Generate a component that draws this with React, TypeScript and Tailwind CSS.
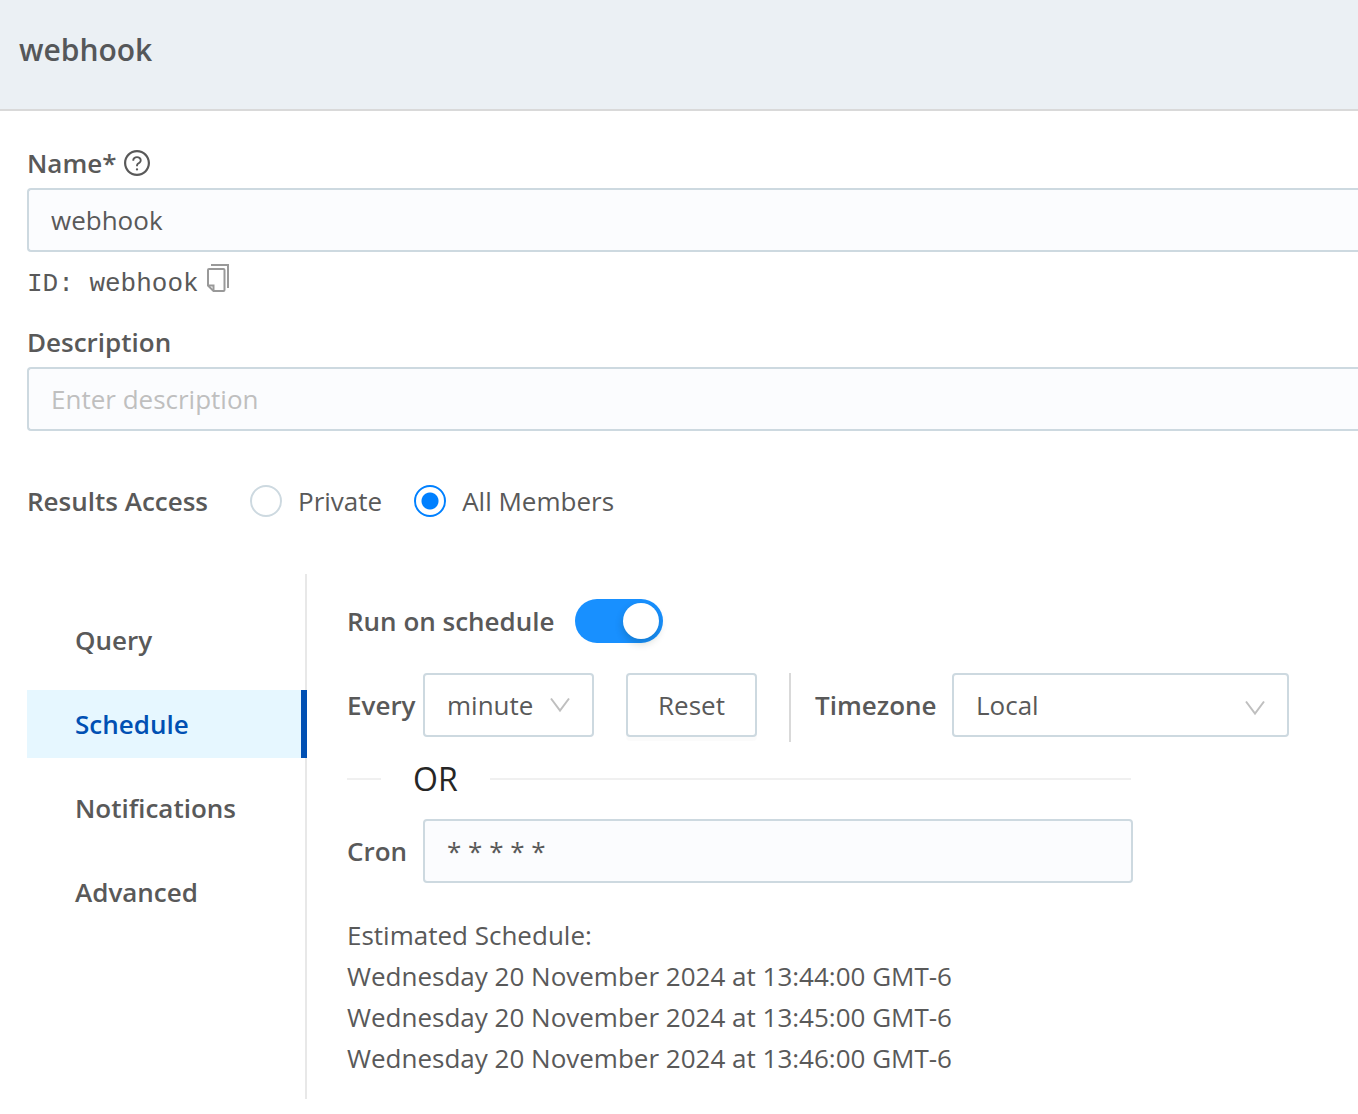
import { useState } from "react";

const tabs = ["Query", "Schedule", "Notifications", "Advanced"];

const estimates = [
  "Wednesday 20 November 2024 at 13:44:00 GMT-6",
  "Wednesday 20 November 2024 at 13:45:00 GMT-6",
  "Wednesday 20 November 2024 at 13:46:00 GMT-6",
];

const access = ["Private", "All Members"];

function HelpIcon() {
  return (
    <svg viewBox="64 64 896 896" className="w-[26px] h-[26px]" fill="currentColor" aria-hidden="true">
      <path d="M512 64C264.600 64 64 264.600 64 512s200.600 448 448 448 448-200.600 448-448S759.400 64 512 64zm0 820c-205.400 0-372-166.600-372-372s166.600-372 372-372 372 166.600 372 372-166.600 372-372 372z" />
      <path d="M623.600 316.700C593.600 290.400 554 276 512 276s-81.600 14.500-111.600 40.700C369.200 344 352 380.700 352 420v7.600c0 4.400 3.600 8 8 8h48c4.400 0 8-3.600 8-8V420c0-44.100 43.100-80 96-80s96 35.900 96 80c0 31.100-22 59.600-56.100 72.700-21.200 8.100-39.200 22.300-52.100 40.900-13.100 19-19.900 41.800-19.900 64.900V620c0 4.400 3.600 8 8 8h48c4.400 0 8-3.600 8-8v-22.700a48.300 48.300 0 0 1 30.900-44.800c59-22.700 97.100-74.700 97.100-132.500.100-39.300-17.100-76-48.300-103.300zM472 732a40 40 0 1 0 80 0 40 40 0 1 0-80 0z" />
    </svg>
  );
}

function CopyIcon() {
  return (
    <svg viewBox="0 0 24 28" className="w-6 h-7" fill="none" stroke="#999999" strokeWidth="2" aria-hidden="true">
      <path d="M4 1h17v23" />
      <path d="M2 5h14.500a1 1 0 0 1 1 1v20a1 1 0 0 1-1 1H6.500L1 21.500V6a1 1 0 0 1 1-1z" />
      <path d="M1 21.500h5.500V27" />
    </svg>
  );
}

function Chevron({ className }: { className: string }) {
  return (
    <svg viewBox="0 0 20 16" className={className} fill="none" stroke="#bfbfbf" strokeWidth="2" aria-hidden="true">
      <path d="M1 1.500 10 13.500 19 1.500" />
    </svg>
  );
}

export default function App() {
  const [tab, setTab] = useState("Schedule");
  const [result, setResult] = useState("All Members");
  const [enabled, setEnabled] = useState(true);
  const [name, setName] = useState("webhook");
  const [cron, setCron] = useState("* * * * *");

  return (
    <div className="min-h-screen bg-white font-['Open_Sans',sans-serif] text-[26px] leading-[41px] text-[#595959]">
      <header className="bg-[#ebf0f4] border-b-2 border-[#d9d9d9] px-[19px] pt-7 pb-[37px]">
        <h1 className="text-[30px] leading-[44px] font-semibold text-[#555759]">webhook</h1>
      </header>

      <main className="pl-[27px] pt-8 pb-[15px]">
        <div className="flex items-center gap-2 h-10">
          <label htmlFor="name" className="font-semibold">Name*</label>
          <HelpIcon />
        </div>
        <input
          id="name"
          value={name}
          onChange={(e) => setName(e.target.value)}
          className="block w-full h-16 mt-[5px] px-[22px] border-2 border-r-0 border-[#cdd9e0] rounded-l bg-[#fbfcfe] outline-none"
        />
        <div className="flex items-start gap-2 mt-3 font-['Liberation_Mono',monospace] leading-10">
          <span>ID: webhook</span>
          <button type="button" aria-label="Copy ID" className="cursor-pointer">
            <CopyIcon />
          </button>
        </div>

        <label htmlFor="description" className="block mt-[18px] font-semibold">Description</label>
        <input
          id="description"
          placeholder="Enter description"
          className="block w-full h-16 mt-1 px-[22px] border-2 border-r-0 border-[#cdd9e0] rounded-l bg-[#fbfcfe] outline-none placeholder:text-[#bfbfbf]"
        />

        <fieldset className="flex items-center h-10 mt-[50px]">
          <legend className="float-left w-[223px] font-semibold">Results Access</legend>
          <div className="flex gap-8">
            {access.map((item) => (
              <label key={item} className="flex items-center gap-4 h-10">
                <input
                  type="radio"
                  name="access"
                  checked={result === item}
                  onChange={() => setResult(item)}
                  className="appearance-none w-8 h-8 rounded-full border-2 border-[#cdd9e0] bg-white checked:border-[#0080ff] checked:bg-[radial-gradient(circle,#0080ff_8px,transparent_9px)]"
                />
                {item}
              </label>
            ))}
          </div>
        </fieldset>

        <div className="flex mt-[53px]">
          <nav className="w-[280px] shrink-0 flex flex-col gap-4 pt-8 shadow-[inset_-2px_0_0_#e8e8e8]">
            {tabs.map((item) => (
              <button
                key={item}
                type="button"
                onClick={() => setTab(item)}
                className={`h-[68px] px-12 text-left font-semibold cursor-pointer ${
                  tab === item ? "bg-[#e6f7ff] text-[#0050b3] border-r-[6px] border-[#0050b3]" : ""
                }`}
              >
                {item}
              </button>
            ))}
          </nav>

          <section className="flex-1 min-w-0 pl-10 pt-[25px] pb-5">
            <div className="flex items-center gap-5 h-11">
              <span id="run-label" className="font-semibold">Run on schedule</span>
              <button
                type="button"
                role="switch"
                aria-checked={enabled}
                aria-labelledby="run-label"
                onClick={() => setEnabled(!enabled)}
                className={`flex items-center w-[88px] h-11 px-1 rounded-full cursor-pointer ${
                  enabled ? "justify-end bg-[#1890ff]" : "justify-start bg-[#bfbfbf]"
                }`}
              >
                <span className="w-9 h-9 rounded-full bg-white shadow-[0_4px_8px_rgba(0,35,11,0.2)]" />
              </button>
            </div>

            <div className="flex items-start mt-[30px]">
              <label htmlFor="every" className="w-[76px] leading-[64px] font-semibold">Every</label>
              <div className="relative">
                <select
                  id="every"
                  defaultValue="minute"
                  className="appearance-none block w-[171px] h-16 px-[22px] border-2 border-[#cdd9e0] rounded bg-white outline-none"
                >
                  <option>minute</option>
                  <option>hour</option>
                  <option>day</option>
                </select>
                <Chevron className="absolute right-6 top-6 w-5 h-4 pointer-events-none" />
              </div>
              <button
                type="button"
                onClick={() => setCron("* * * * *")}
                className="w-[131px] h-16 ml-8 border-2 border-[#cdd9e0] rounded bg-white shadow-[0_4px_0_rgba(0,0,0,0.016)] cursor-pointer"
              >
                Reset
              </button>
              <div className="h-[69px] ml-8 pl-6 border-l-2 border-[#d9d9d9]">
                <label htmlFor="timezone" className="block w-[137px] leading-[64px] font-semibold">Timezone</label>
              </div>
              <div className="relative">
                <select
                  id="timezone"
                  defaultValue="Local"
                  className="appearance-none block w-[337px] h-16 px-[22px] border-2 border-[#cdd9e0] rounded bg-white outline-none"
                >
                  <option>Local</option>
                  <option>UTC</option>
                </select>
                <Chevron className="absolute right-6 top-[27px] w-5 h-4 pointer-events-none" />
              </div>
            </div>

            <div className="max-w-[786px]">
              <div className="flex items-center mt-3 pr-[2px] gap-8 text-[32px] leading-[50px] text-[#262626]">
                <span className="w-[34px] h-[2px] bg-[#f0f0f0]" />
                OR
                <span className="flex-1 h-[2px] bg-[#f0f0f0]" />
              </div>

              <div className="flex items-center mt-[15px]">
                <label htmlFor="cron" className="w-[76px] font-semibold">Cron</label>
                <input
                  id="cron"
                  value={cron}
                  onChange={(e) => setCron(e.target.value)}
                  className="flex-1 min-w-0 h-16 px-[22px] border-2 border-[#cdd9e0] rounded bg-[#fbfcfe] outline-none"
                />
              </div>
            </div>

            <div className="mt-8">
              <p>Estimated Schedule:</p>
              {estimates.map((line) => (
                <p key={line}>{line}</p>
              ))}
            </div>
          </section>
        </div>
      </main>
    </div>
  );
}
